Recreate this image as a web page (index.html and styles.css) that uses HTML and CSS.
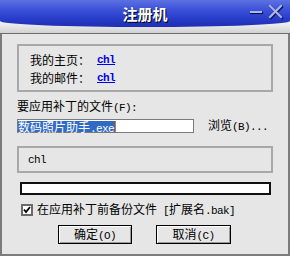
FILE: index.html
```html
<!DOCTYPE html>
<html lang="zh-CN">
<head>
<meta charset="utf-8">
<title>注册机</title>
<link rel="stylesheet" href="styles.css">
</head>
<body>
<div class="window">
  <header class="titlebar">
    <div class="caption">
      <span class="spacer"></span>
      <h1 class="title">注册机</h1>
      <svg class="controls" width="36" height="22" viewBox="0 0 36 22">
        <g fill="none" stroke="#0c1660" stroke-width="2.4" stroke-linecap="square">
          <path d="M1 13 H12"/>
          <path d="M21 7 L32 18 M32 7 L21 18"/>
        </g>
        <g fill="none" stroke="#aeb6e6" stroke-width="2" stroke-linecap="square">
          <path d="M0 12 H11"/>
          <path d="M20 6 L31 17 M31 6 L20 17"/>
        </g>
      </svg>
    </div>
  </header>
  <main class="content">
    <section class="group info">
      <span class="lbl">我的主页：</span><a class="link mono" href="#">chl</a>
      <span class="lbl">我的邮件：</span><a class="link mono" href="#">chl</a>
    </section>
    <div class="file-label">要应用补丁的文件<span class="mono">(F):</span></div>
    <div class="file-row">
      <div class="input"><span class="sel">数码照片助手<span class="mono">.exe</span></span><span class="caret"></span></div>
      <span class="browse">浏览<span class="mono">(B)...</span></span>
    </div>
    <div class="group static"><span class="mono">chl</span></div>
    <div class="progress"></div>
    <div class="check-row">
      <svg class="checkbox" width="12" height="12" viewBox="0 0 12 12">
        <rect x="1" y="1" width="10" height="10" fill="#fff" stroke="#6a6a6a" stroke-width="2"/>
        <path d="M3 5.5 L5 8 L9 3" fill="none" stroke="#000" stroke-width="1.8"/>
      </svg>
      <span class="check-text">在应用补丁前备份文件<span class="mono"> [</span>扩展名<span class="mono">.bak]</span></span>
    </div>
    <div class="buttons">
      <button class="btn ok">确定<span class="mono">(O)</span></button>
      <button class="btn cancel">取消<span class="mono">(C)</span></button>
    </div>
  </main>
</div>
</body>
</html>
```
FILE: styles.css
```css
* { box-sizing: border-box; }
html, body { margin: 0; padding: 0; }
body {
  width: 290px;
  height: 256px;
  overflow: hidden;
  background: #e6e6e6;
  font-family: "Noto Sans CJK SC", "DejaVu Sans", sans-serif;
  font-size: 12px;
  color: #000;
}
.window {
  width: 290px;
  height: 256px;
  display: flex;
  flex-direction: column;
}
.titlebar {
  height: 34px;
  flex: none;
  background: linear-gradient(to bottom, #f6f6f6 0px, #f2f2f2 22px, #d8d8d8 31px, #cfcfcf 33px);
  border-bottom: 1px solid #6e6e6e;
}
.caption {
  height: 27px;
  display: grid;
  grid-template-columns: 1fr auto 1fr;
  align-items: center;
  background: linear-gradient(to bottom, #5d71e2 0%, #3d52d8 35%, #283cca 70%, #1e2eb2 100%);
  border-radius: 0 0 50% 50% / 0 0 6px 6px;
}
.title {
  margin: 0;
  padding-top: 1px;
  font-size: 15px;
  line-height: 20px;
  font-weight: bold;
  color: #fff;
  text-shadow: 1px 1px 0 #000;
}
.controls {
  justify-self: end;
  align-self: start;
  margin-right: 4px;
}
.content {
  flex: 1;
  border-left: 2px solid #7c7c7c;
  border-right: 2px solid #7c7c7c;
  border-bottom: 2px solid #7c7c7c;
  padding: 10px 15px 0 15px;
}
.mono {
  font-family: "Liberation Mono", "DejaVu Sans Mono", monospace;
  font-size: 11px;
  letter-spacing: -0.6px;
  white-space: pre;
}
.group {
  border: 2px solid #a8a8a8;
}
.info {
  display: grid;
  grid-template-columns: 67px auto;
  justify-content: start;
  align-items: center;
  line-height: 18px;
  padding: 5px 0 3px 11px;
}
.link {
  color: #0000ee;
  text-decoration: underline;
  font-weight: bold;
}
.file-label {
  margin-top: 7px;
  line-height: 14px;
}
.file-row {
  margin-top: 3px;
  display: flex;
  align-items: center;
}
.input {
  width: 177px;
  height: 14px;
  border: 1px solid #7a7a7a;
  background: #fff;
  display: flex;
  align-items: center;
}
.sel {
  display: inline-block;
  height: 11px;
  line-height: 11px;
  background: #316ac5;
  color: #fff;
  padding-right: 1px;
  white-space: nowrap;
}
.caret {
  width: 1px;
  height: 11px;
  background: #e07a10;
}
.browse {
  margin-left: 14px;
  line-height: 14px;
}
.static {
  margin-top: 12px;
  height: 27px;
  display: flex;
  align-items: center;
  padding-left: 9px;
}
.progress {
  margin: 9px 0 0 3px;
  width: 251px;
  height: 13px;
  border: 2px solid #111;
  background: #fff;
}
.check-row {
  margin: 9px 0 0 4px;
  height: 12px;
  display: flex;
  align-items: center;
  gap: 4px;
}
.checkbox { flex: none; }
.check-text { line-height: 14px; white-space: nowrap; }
.buttons {
  margin-top: 9px;
  padding-left: 41px;
  display: flex;
  gap: 24px;
}
.btn {
  height: 19px;
  padding: 0 0 2px 0;
  font: inherit;
  line-height: 15px;
  background: #e6e6e6;
  border: 1px solid #000;
  box-shadow: inset 1px 1px 0 #fff, inset -1px -1px 0 #9a9a9a;
  color: #000;
}
.ok { width: 74px; }
.cancel { width: 75px; }
```
